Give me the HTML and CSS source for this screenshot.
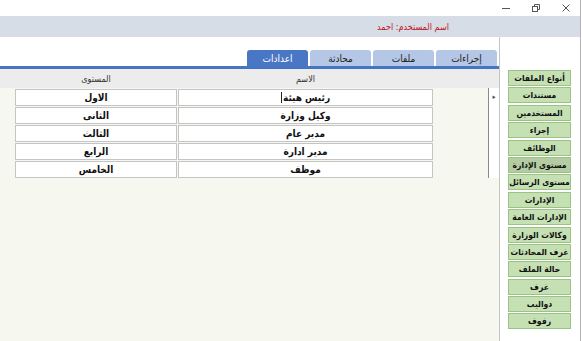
FILE: index.html
```html
<!DOCTYPE html>
<html lang="ar">
<head>
    <meta charset="utf-8">
    <title>الاعدادات</title>
    <link rel="stylesheet" href="styles.css">
</head>
<body>
    <div class="window">
        <div class="titlebar">
            <span class="ctl">
                <svg width="8" height="8" viewBox="0 0 8 8"><path d="M0 4.5h8" stroke="#555" stroke-width="1"/></svg>
            </span>
            <span class="ctl">
                <svg width="8" height="8" viewBox="0 0 8 8" fill="none" stroke="#555" stroke-width="1"><path d="M2.5 2.5V0.5h5v5h-2"/><rect x="0.5" y="2.5" width="5" height="5"/></svg>
            </span>
            <span class="ctl">
                <svg width="8" height="8" viewBox="0 0 8 8"><path d="M0.5 0.5l7 7M7.5 0.5l-7 7" stroke="#555" stroke-width="1"/></svg>
            </span>
        </div>

        <div class="userbar">
            <span dir="rtl">اسم المستخدم: احمد</span>
        </div>

        <div class="main">
            <div class="content">
                <div class="tabs">
                    <div class="tab active">اعدادات</div>
                    <div class="tab">محادثة</div>
                    <div class="tab">ملفات</div>
                    <div class="tab">إجراءات</div>
                </div>

                <div class="grid">
                    <div class="grid-head">
                        <div class="spacer"></div>
                        <div class="col-level">المستوى</div>
                        <div class="col-name">الاسم</div>
                    </div>

                    <div class="row">
                        <div class="spacer"></div>
                        <div class="cell col-level">الاول</div>
                        <div class="cell col-name"><span class="caret">رئيس هيئة</span></div>
                        <div class="fill"></div>
                        <div class="selector current">&#9656;</div>
                    </div>
                    <div class="row">
                        <div class="spacer"></div>
                        <div class="cell col-level">الثانى</div>
                        <div class="cell col-name">وكيل وزارة</div>
                        <div class="fill"></div>
                        <div class="selector"></div>
                    </div>
                    <div class="row">
                        <div class="spacer"></div>
                        <div class="cell col-level">الثالث</div>
                        <div class="cell col-name">مدير عام</div>
                        <div class="fill"></div>
                        <div class="selector"></div>
                    </div>
                    <div class="row">
                        <div class="spacer"></div>
                        <div class="cell col-level">الرابع</div>
                        <div class="cell col-name">مدير ادارة</div>
                        <div class="fill"></div>
                        <div class="selector"></div>
                    </div>
                    <div class="row">
                        <div class="spacer"></div>
                        <div class="cell col-level">الخامس</div>
                        <div class="cell col-name">موظف</div>
                        <div class="fill"></div>
                        <div class="selector"></div>
                    </div>
                </div>
            </div>

            <div class="side">
                <button class="side-btn">أنواع الملفات</button>
                <button class="side-btn">مستندات</button>
                <button class="side-btn">المستخدمين</button>
                <button class="side-btn">إجراء</button>
                <button class="side-btn">الوظائف</button>
                <button class="side-btn selected">مستوى الإدارة</button>
                <button class="side-btn">مستوى الرسائل</button>
                <button class="side-btn">الإدارات</button>
                <button class="side-btn">الإدارات العامة</button>
                <button class="side-btn">وكالات الوزارة</button>
                <button class="side-btn">غرف المحادثات</button>
                <button class="side-btn">حالة الملف</button>
                <button class="side-btn">غرف</button>
                <button class="side-btn">دواليب</button>
                <button class="side-btn">رفوف</button>
            </div>
        </div>
    </div>
</body>
</html>
```

FILE: styles.css
```css
* {
    margin: 0;
    padding: 0;
    box-sizing: border-box;
}

html, body {
    width: 100%;
    height: 100%;
    overflow: hidden;
}

body {
    background-color: #ffffff;
    font-family: "DejaVu Sans Condensed", "DejaVu Sans", sans-serif;
    font-size: 11px;
    color: #1a1a1a;
}

.window {
    width: 581px;
    height: 341px;
    display: flex;
    flex-direction: column;
    border-right: 1px solid #b4b4b4;
}

/* title bar */
.titlebar {
    height: 16px;
    display: flex;
    justify-content: flex-end;
    align-items: center;
    padding-right: 10px;
    gap: 22px;
}

.ctl {
    width: 8px;
    height: 8px;
    display: flex;
}

.userbar {
    height: 21px;
    background-color: #d6dde6;
    display: flex;
    justify-content: flex-end;
    align-items: center;
    padding-right: 131px;
    color: #c0141c;
    font-size: 9px;
}

.main {
    flex: 1;
    display: flex;
}

.content {
    width: 500px;
    flex-shrink: 0;
    display: flex;
    flex-direction: column;
    border-right: 1px solid #c4c4c4;
}

/* tabs */
.tabs {
    height: 32px;
    display: flex;
    justify-content: flex-end;
    align-items: flex-end;
    gap: 2px;
    padding-right: 2px;
    border-bottom: 3px solid #4874c4;
}

.tab {
    width: 61px;
    height: 16px;
    background-color: #b4c7e7;
    border-radius: 3px 3px 0 0;
    display: flex;
    justify-content: center;
    align-items: center;
    font-size: 10px;
    color: #222;
}

.tab.active {
    background-color: #4a76c6;
    color: #ffffff;
}

/* datasheet */
.grid {
    flex: 1;
    background-color: #f6f7ef;
}

.grid-head {
    height: 19px;
    background-color: #ececec;
    display: flex;
    align-items: center;
    font-size: 9px;
    color: #333;
}

.grid-head .col-level,
.grid-head .col-name {
    text-align: center;
}

.spacer {
    width: 15px;
}

.col-level {
    width: 162px;
}

.col-name {
    width: 255px;
    margin-left: 1px;
}

.row {
    height: 18px;
    display: flex;
}

.cell {
    height: 17px;
    margin-top: 1px;
    background-color: #ffffff;
    border: 1px solid #c4c4c4;
    display: flex;
    justify-content: center;
    align-items: center;
    font-weight: bold;
    font-size: 10px;
    color: #111;
}

.caret {
    border-left: 1px solid #222;
    padding-left: 1px;
}

.fill {
    flex: 1;
}

.selector {
    width: 11px;
    background-color: #ffffff;
    border-left: 1px solid #8a8a8a;
    font-size: 7px;
    color: #555;
    display: flex;
    justify-content: center;
    align-items: center;
}

/* side buttons */
.side {
    width: 80px;
    flex-shrink: 0;
    display: flex;
    flex-direction: column;
    gap: 1.4px;
    padding: 33px 9px 0 8px;
}

.side-btn {
    height: 16px;
    background-color: #c5e0b3;
    border: 1px solid #9dc285;
    font-family: "DejaVu Sans Condensed", "DejaVu Sans", sans-serif;
    font-weight: bold;
    font-size: 8.5px;
    white-space: nowrap;
    color: #111;
    display: flex;
    justify-content: center;
    align-items: center;
    cursor: pointer;
}

.side-btn.selected {
    background-color: #b3cca2;
}
```
